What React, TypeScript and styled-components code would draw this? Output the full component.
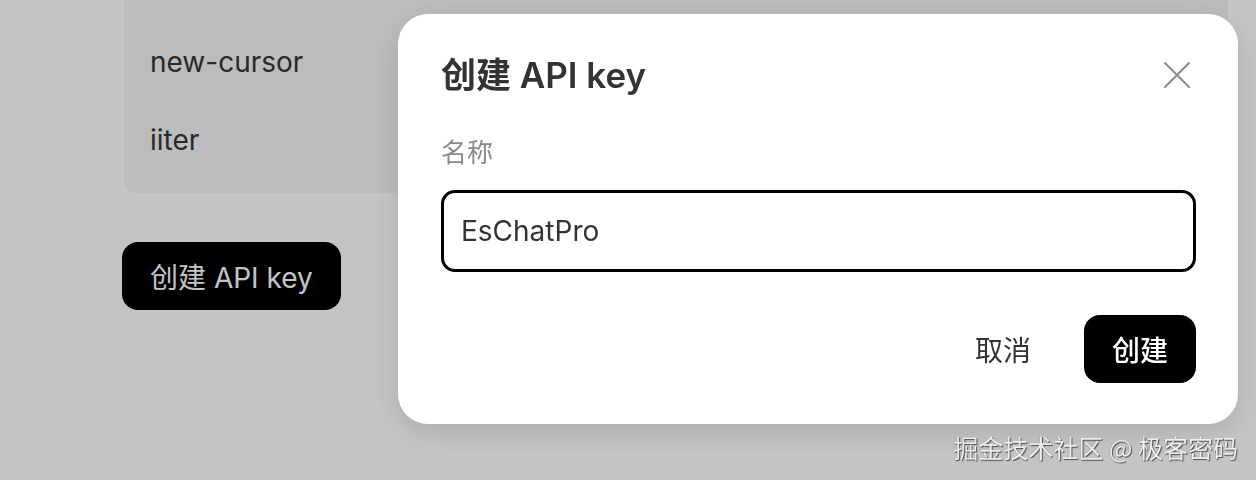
import React from "react";
import styled, { createGlobalStyle } from "styled-components";

const GlobalStyle = createGlobalStyle`
  html, body { margin: 0; padding: 0; }
  body {
    background: #ffffff;
    font-family: Inter, "Noto Sans CJK SC", "Noto Sans", sans-serif;
    width: 1256px;
    height: 480px;
    overflow: hidden;
  }
`;

const Page = styled.div`
  display: flex;
  flex-direction: column;
  align-items: flex-start;
  padding-left: 122px;
`;

const KeyList = styled.div`
  margin-left: 2px;
  width: 1104px;
  padding: 23px 26px 14px;
  background: #f5f5f5;
  border-radius: 0 0 12px 12px;
  display: flex;
  flex-direction: column;
  box-sizing: border-box;
`;

const KeyRow = styled.div`
  height: 78px;
  display: flex;
  align-items: center;
  font-size: 28px;
  color: #363636;
`;

const PrimaryButton = styled.button`
  height: 68px;
  padding: 0 28px;
  border: none;
  border-radius: 16px;
  background: #000;
  color: #fff;
  font-family: Inter, "Noto Sans CJK SC", sans-serif;
  font-size: 28px;
  font-weight: 500;
  display: flex;
  align-items: center;
  justify-content: center;
`;

const OpenButton = styled(PrimaryButton)`
  margin-top: 49px;
  font-weight: 400;
`;

const Overlay = styled.div`
  position: fixed;
  inset: 0;
  background: rgba(0, 0, 0, 0.23);
`;

const Dialog = styled.div`
  position: fixed;
  left: 398px;
  top: 14px;
  width: 840px;
  height: 410px;
  box-sizing: border-box;
  background: #fff;
  border-radius: 30px;
  padding: 39px 42px 41px 43px;
  display: flex;
  flex-direction: column;
  box-shadow: 0 8px 30px rgba(0, 0, 0, 0.12);
`;

const Header = styled.div`
  display: flex;
  align-items: center;
  justify-content: space-between;
  height: 44px;
`;

const Title = styled.h2`
  margin: 0;
  font-size: 35px;
  line-height: 44px;
  font-weight: 600;
  color: #333;
`;

const CloseButton = styled.button`
  border: none;
  background: none;
  padding: 0;
  margin-right: 5px;
  width: 28px;
  height: 28px;
  display: flex;
  align-items: center;
  justify-content: center;
`;

const Label = styled.label`
  margin-top: 40px;
  font-size: 26px;
  line-height: 32px;
  color: #8a8a8a;
`;

const Input = styled.input`
  margin-top: 21px;
  height: 82px;
  box-sizing: border-box;
  border: 3px solid #000;
  border-radius: 14px;
  padding: 0 17px;
  font-family: Inter, "Noto Sans CJK SC", sans-serif;
  font-size: 28px;
  color: #333;
  outline: none;
`;

const Footer = styled.div`
  margin-top: 43px;
  display: flex;
  justify-content: flex-end;
  gap: 25px;
`;

const GhostButton = styled.button`
  height: 68px;
  width: 112px;
  border: none;
  background: transparent;
  color: #333;
  font-family: Inter, "Noto Sans CJK SC", sans-serif;
  font-size: 28px;
`;

const SubmitButton = styled(PrimaryButton)`
  width: 112px;
  padding: 0;
`;

const Watermark = styled.div`
  position: fixed;
  right: 18px;
  bottom: 15px;
  font-family: "Noto Sans CJK SC", sans-serif;
  font-size: 25px;
  color: #eeeeee;
  text-shadow: 1px 1px 1px rgba(0, 0, 0, 0.6), -0.5px -0.5px 0 rgba(0, 0, 0, 0.25);
`;

export default function App() {
  return (
    <>
      <GlobalStyle />
      <Page>
        <KeyList>
          <KeyRow>new-cursor</KeyRow>
          <KeyRow>iiter</KeyRow>
        </KeyList>
        <OpenButton>创建 API key</OpenButton>
      </Page>
      <Overlay />
      <Dialog>
        <Header>
          <Title>创建 API key</Title>
          <CloseButton aria-label="关闭">
            <svg width="28" height="28" viewBox="0 0 28 28">
              <path d="M2 2 L26 26 M26 2 L2 26" stroke="#8c8c8c" strokeWidth="2" strokeLinecap="round" />
            </svg>
          </CloseButton>
        </Header>
        <Label>名称</Label>
        <Input defaultValue="EsChatPro" />
        <Footer>
          <GhostButton>取消</GhostButton>
          <SubmitButton>创建</SubmitButton>
        </Footer>
      </Dialog>
      <Watermark>掘金技术社区 @ 极客密码</Watermark>
    </>
  );
}
